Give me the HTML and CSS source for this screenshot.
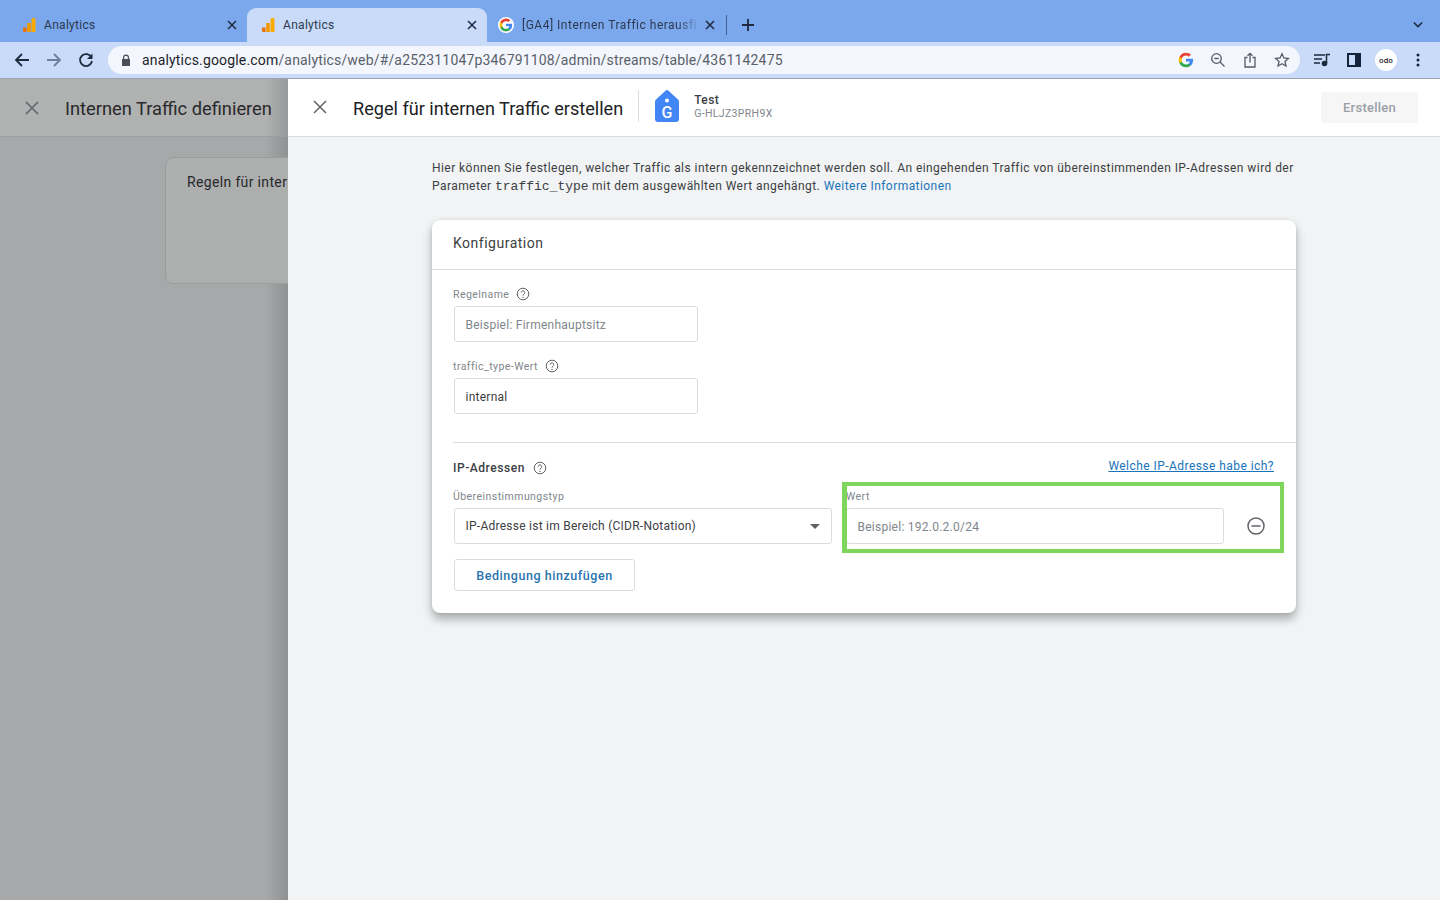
FILE: index.html
```html
<!DOCTYPE html>
<html lang="de">
<head>
    <meta charset="UTF-8">
    <title>Analytics</title>
    <link rel="stylesheet" href="styles.css">
</head>
<body>
    <div class="tabstrip">
        <div class="tab">
            <svg class="favicon" viewBox="0 0 16 16"><path fill="#e8710a" d="M2 10.500h3.500V15H3.500A1.500 1.500 0 0 1 2 13.500z"/><rect fill="#f29900" x="6.200" y="6" width="3.600" height="9"/><path fill="#f9ab00" d="M10.500 2.500A1.500 1.500 0 0 1 12 1h1a1.500 1.500 0 0 1 1.500 1.500V15h-4z"/></svg>
            <span class="tab-title">Analytics</span>
            <svg class="tab-close" viewBox="0 0 10 10"><path d="M1 1l8 8M9 1l-8 8"/></svg>
        </div>
        <div class="tab tab-active">
            <svg class="favicon" viewBox="0 0 16 16"><path fill="#e8710a" d="M2 10.500h3.500V15H3.500A1.500 1.500 0 0 1 2 13.500z"/><rect fill="#f29900" x="6.200" y="6" width="3.600" height="9"/><path fill="#f9ab00" d="M10.500 2.500A1.500 1.500 0 0 1 12 1h1a1.500 1.500 0 0 1 1.500 1.500V15h-4z"/></svg>
            <span class="tab-title">Analytics</span>
            <svg class="tab-close" viewBox="0 0 10 10"><path d="M1 1l8 8M9 1l-8 8"/></svg>
        </div>
        <div class="tab tab-last">
            <svg class="favicon favicon-round" viewBox="0 0 24 24"><path fill="#4285f4" d="M22.560 12.250c0-.78-.07-1.530-.2-2.250H12v4.260h5.920c-.26 1.370-1.040 2.530-2.210 3.310v2.770h3.570c2.080-1.920 3.280-4.740 3.280-8.090z"/><path fill="#34a853" d="M12 23c2.970 0 5.460-.98 7.280-2.660l-3.570-2.770c-.98.660-2.230 1.060-3.710 1.060-2.860 0-5.290-1.930-6.160-4.530H2.180v2.840C3.990 20.530 7.700 23 12 23z"/><path fill="#fbbc05" d="M5.840 14.090c-.22-.66-.35-1.360-.35-2.090s.13-1.430.35-2.090V7.070H2.180C1.430 8.550 1 10.220 1 12s.43 3.450 1.180 4.930l3.660-2.840z"/><path fill="#ea4335" d="M12 5.380c1.620 0 3.060.56 4.210 1.640l3.150-3.150C17.450 2.090 14.970 1 12 1 7.700 1 3.990 3.470 2.180 7.070l3.660 2.840c.87-2.600 3.300-4.530 6.160-4.530z"/></svg>
            <span class="tab-title tab-title-fade">[GA4] Internen Traffic herausfi</span>
            <svg class="tab-close" viewBox="0 0 10 10"><path d="M1 1l8 8M9 1l-8 8"/></svg>
        </div>
        <svg class="new-tab" viewBox="0 0 12 12"><path d="M6 0v12M0 6h12"/></svg>
        <svg class="tab-search" viewBox="0 0 12 8"><path d="M1 1.500l5 5 5-5"/></svg>
    </div>

    <div class="toolbar">
        <svg class="nav-icon" viewBox="0 0 16 16"><path d="M15 8H2M8 2L2 8l6 6"/></svg>
        <svg class="nav-icon nav-off" viewBox="0 0 16 16"><path d="M1 8h13M8 2l6 6-6 6"/></svg>
        <svg class="nav-icon" viewBox="0 0 16 16"><path d="M13.500 5.500A6 6 0 1 0 14 9"/><path class="solid" d="M14.500 1.500v5.500H9z"/></svg>
        <div class="omnibox">
            <svg class="lock" viewBox="0 0 10 12"><path d="M2 5V3.500a3 3 0 0 1 6 0V5h1v7H1V5zm1.200 0h3.600V3.500a1.800 1.800 0 0 0-3.600 0z"/></svg>
            <span class="url"><b>analytics.google.com</b>/analytics/web/#/a252311047p346791108/admin/streams/table/4361142475</span>
            <svg class="omni-icon omni-g" viewBox="0 0 24 24"><path fill="#4285f4" d="M22.560 12.250c0-.78-.07-1.530-.2-2.250H12v4.260h5.920c-.26 1.370-1.040 2.530-2.210 3.310v2.770h3.570c2.080-1.920 3.280-4.740 3.280-8.090z"/><path fill="#34a853" d="M12 23c2.970 0 5.460-.98 7.280-2.660l-3.570-2.770c-.98.660-2.230 1.060-3.710 1.060-2.860 0-5.290-1.930-6.160-4.530H2.180v2.840C3.990 20.530 7.700 23 12 23z"/><path fill="#fbbc05" d="M5.840 14.090c-.22-.66-.35-1.360-.35-2.090s.13-1.430.35-2.090V7.070H2.180C1.430 8.550 1 10.220 1 12s.43 3.450 1.180 4.930l3.660-2.840z"/><path fill="#ea4335" d="M12 5.380c1.620 0 3.060.56 4.210 1.640l3.150-3.150C17.450 2.090 14.970 1 12 1 7.700 1 3.990 3.470 2.180 7.070l3.660 2.840c.87-2.600 3.300-4.530 6.160-4.530z"/></svg>
            <svg class="omni-icon" viewBox="0 0 16 16"><circle cx="6.500" cy="6.500" r="4.800"/><path d="M4.300 6.500h4.400M10 10l4.500 4.500"/></svg>
            <svg class="omni-icon" viewBox="0 0 16 16"><path d="M5.500 5.500H3v9.500h10V5.500h-2.500M8 10.500V1.500M5.500 3.800L8 1.300l2.500 2.500"/></svg>
            <svg class="omni-icon" viewBox="0 0 16 16"><path d="M8 1.800l1.900 4.200 4.500.5-3.400 3 1 4.500L8 11.700 4 14l1-4.500-3.400-3 4.500-.5z"/></svg>
        </div>
        <svg class="ext-icon ext-media" viewBox="0 0 16 14"><path class="line" d="M0 2h11M0 6h8M0 10h6"/><path class="line" d="M12.500 10V1.500H16"/><circle class="dot" cx="10.500" cy="10.500" r="2.800"/></svg>
        <svg class="ext-icon ext-panel" viewBox="0 0 14 14"><path d="M0 0h14v14H0zM2 2v10h6V2z" fill-rule="evenodd"/></svg>
        <div class="avatar"><span>odo</span></div>
        <svg class="ext-icon ext-menu" viewBox="0 0 4 14"><circle cx="2" cy="2" r="1.500"/><circle cx="2" cy="7" r="1.500"/><circle cx="2" cy="12" r="1.500"/></svg>
    </div>

    <div class="page">
        <!-- abgedunkelte Seite hinter dem Drawer -->
        <aside class="behind">
            <div class="behind-head">
                <svg class="close-icon" viewBox="0 0 14 14"><path d="M1 1l12 12M13 1L1 13"/></svg>
                <span class="behind-title">Internen Traffic definieren</span>
            </div>
            <div class="behind-card">Regeln für inter</div>
        </aside>

        <section class="drawer">
            <header class="drawer-head">
                <svg class="close-icon" viewBox="0 0 14 14"><path d="M1 1l12 12M13 1L1 13"/></svg>
                <h1 class="drawer-title">Regel für internen Traffic erstellen</h1>
                <div class="stream">
                    <svg class="stream-icon" viewBox="0 0 24 32"><path fill="#4285f4" d="M10.500 .8a2.200 2.200 0 0 1 3 0l9.500 8.700a3 3 0 0 1 1 2.200V29a3 3 0 0 1-3 3H3a3 3 0 0 1-3-3V11.700a3 3 0 0 1 1-2.200z"/><circle cx="12" cy="10.500" r="2" fill="#fff"/><text x="12" y="27.500" text-anchor="middle">G</text></svg>
                    <div class="stream-text">
                        <div class="stream-name">Test</div>
                        <div class="stream-id">G-HLJZ3PRH9X</div>
                    </div>
                </div>
                <button class="create-btn">Erstellen</button>
            </header>

            <div class="drawer-body">
                <p class="intro">Hier können Sie festlegen, welcher Traffic als intern gekennzeichnet werden soll. An eingehenden Traffic von übereinstimmenden IP-Adressen wird der Parameter <code>traffic_type</code> mit dem ausgewählten Wert angehängt. <a href="#">Weitere Informationen</a></p>

                <div class="card">
                    <div class="card-head">Konfiguration</div>
                    <div class="card-top">
                        <div class="field-label">Regelname
                            <svg class="help" viewBox="0 0 14 14"><circle cx="7" cy="7" r="5.800"/><path d="M5.200 5.600a1.800 1.800 0 1 1 2.800 1.500c-.7.500-1 .8-1 1.600"/><circle class="help-dot" cx="7" cy="10.400" r=".7"/></svg>
                        </div>
                        <div class="input input-short placeholder">Beispiel: Firmenhauptsitz</div>
                        <div class="field-label field-label-next">traffic_type-Wert
                            <svg class="help" viewBox="0 0 14 14"><circle cx="7" cy="7" r="5.800"/><path d="M5.200 5.600a1.800 1.800 0 1 1 2.800 1.500c-.7.500-1 .8-1 1.600"/><circle class="help-dot" cx="7" cy="10.400" r=".7"/></svg>
                        </div>
                        <div class="input input-short">internal</div>
                    </div>

                    <div class="card-bottom">
                        <div class="ip-head">
                            <span class="ip-title">IP-Adressen
                                <svg class="help" viewBox="0 0 14 14"><circle cx="7" cy="7" r="5.800"/><path d="M5.200 5.600a1.800 1.800 0 1 1 2.800 1.500c-.7.500-1 .8-1 1.600"/><circle class="help-dot" cx="7" cy="10.400" r=".7"/></svg>
                            </span>
                            <a class="ip-link" href="#">Welche IP-Adresse habe ich?</a>
                        </div>
                        <div class="ip-row">
                            <div class="ip-type">
                                <div class="field-label">Übereinstimmungstyp</div>
                                <div class="input select">IP-Adresse ist im Bereich (CIDR-Notation)<span class="caret"></span></div>
                            </div>
                            <div class="ip-value">
                                <div class="field-label">Wert</div>
                                <div class="input placeholder">Beispiel: 192.0.2.0/24</div>
                            </div>
                            <svg class="remove" viewBox="0 0 18 18"><circle cx="9" cy="9" r="8"/><path d="M4.500 9h9"/></svg>
                            <div class="highlight"></div>
                        </div>
                        <button class="add-btn">Bedingung hinzufügen</button>
                    </div>
                </div>
            </div>
        </section>
    </div>
</body>
</html>
```

FILE: styles.css
```css
* {
    box-sizing: border-box;
}

html, body {
    margin: 0;
    padding: 0;
    height: 900px;
    overflow: hidden;
}

body {
    font-family: Roboto, "Liberation Sans", sans-serif;
    color: #3c4043;
    background: #f1f3f4;
}

/* Browser */
.tabstrip {
    display: flex;
    align-items: flex-end;
    height: 42px;
    padding-left: 8px;
    background: #7ba7ec;
}

.tab {
    display: flex;
    align-items: center;
    width: 239px;
    height: 34px;
    padding: 0 6px 0 13px;
    border-radius: 9px 9px 0 0;
    font-size: 12px;
    color: #2b3a50;
}

.tab-active {
    width: 240px;
    background: #c9dbf8;
}

.tab-last {
    position: relative;
    width: 240px;
    padding-left: 11px;
    padding-right: 10px;
}

.tab-last::after {
    content: "";
    position: absolute;
    right: 0;
    top: 7px;
    height: 20px;
    width: 1px;
    background: #3f5f8f;
}

.favicon {
    width: 16px;
    height: 16px;
    flex: none;
    margin-right: 7px;
}

.favicon-round {
    background: #fff;
    border-radius: 50%;
    padding: 1px;
    margin-right: 8px;
}

.tab-title {
    flex: 1;
    white-space: nowrap;
    letter-spacing: 0.3px;
}

.tab-title-fade {
    letter-spacing: 0.5px;
    -webkit-mask-image: linear-gradient(to right, #000 88%, rgba(0, 0, 0, 0.15) 100%);
    mask-image: linear-gradient(to right, #000 88%, rgba(0, 0, 0, 0.15) 100%);
}

.tab-close {
    width: 10px;
    height: 10px;
    flex: none;
    margin: 0 4px 0 8px;
    fill: none;
    stroke: #1d2a3d;
    stroke-width: 1.5;
}

.new-tab {
    width: 12px;
    height: 12px;
    margin: 0 0 11px 15px;
    fill: none;
    stroke: #1d2a3d;
    stroke-width: 1.8;
}

.tab-search {
    width: 10px;
    height: 7px;
    margin: 0 17px 14px auto;
    fill: none;
    stroke: #1d2a3d;
    stroke-width: 1.8;
}

.toolbar {
    display: flex;
    align-items: center;
    height: 37px;
    padding: 0 0 1px 14px;
    background: #c9dbf8;
    border-bottom: 1px solid #9aa3b0;
}

.nav-icon {
    width: 16px;
    height: 16px;
    margin-right: 16px;
    fill: none;
    stroke: #1d2a3d;
    stroke-width: 1.8;
}

.nav-icon .solid {
    fill: #1d2a3d;
    stroke: none;
}

.nav-off {
    stroke: #6d7f99;
}

.omnibox {
    display: flex;
    align-items: center;
    width: 1192px;
    height: 28px;
    margin-left: -2px;
    padding: 0 10px 0 13px;
    border-radius: 14px;
    background: #f3f7fd;
}

.lock {
    width: 10px;
    height: 12px;
    margin-right: 11px;
    fill: #4a4f57;
}

.url {
    flex: 1;
    font-size: 14px;
    letter-spacing: 0.17px;
    color: #5a6069;
}

.url b {
    font-weight: 400;
    color: #1f2329;
}

.omni-icon {
    width: 16px;
    height: 16px;
    margin-left: 16px;
    fill: none;
    stroke: #555b64;
    stroke-width: 1.3;
}

.omni-g {
    stroke: none;
}

.ext-icon {
    flex: none;
}

.ext-media {
    width: 16px;
    height: 14px;
    margin-left: 14px;
}

.ext-media .line {
    fill: none;
    stroke: #1d2a3d;
    stroke-width: 1.5;
}

.ext-media .dot {
    fill: #1d2a3d;
}

.ext-panel {
    width: 14px;
    height: 14px;
    margin-left: 17px;
    fill: #14233a;
}

.avatar {
    display: flex;
    align-items: center;
    justify-content: center;
    width: 22px;
    height: 22px;
    margin-left: 14px;
    border-radius: 50%;
    background: #fff;
    font: 600 7.5px "Open Sans", sans-serif;
    color: #222;
}

.ext-menu {
    width: 4px;
    height: 14px;
    margin-left: 19px;
    fill: #14233a;
}

/* Seite */
.page {
    display: flex;
    height: 821px;
}

.behind {
    flex: none;
    width: 288px;
    overflow: hidden;
    background: linear-gradient(to right, #a6a8a9 92%, #8f9192 100%);
}

.behind-head {
    display: flex;
    align-items: center;
    height: 58px;
    padding-left: 25px;
    border-bottom: 1px solid #9b9d9e;
    background: linear-gradient(to right, #b0b1b1 92%, #98999a 100%);
}

.close-icon {
    width: 14px;
    height: 14px;
    flex: none;
    fill: none;
    stroke: #5f6368;
    stroke-width: 1.5;
}

.behind-title {
    margin: 2px 0 0 26px;
    font-size: 18.3px;
    white-space: nowrap;
    color: #28292b;
}

.behind-card {
    width: 300px;
    height: 127px;
    margin: 20px 0 0 165px;
    padding: 16px 21px;
    border: 1px solid #999b9d;
    border-radius: 8px;
    background: #adafaf;
    font-size: 14px;
    letter-spacing: 0.35px;
    white-space: nowrap;
    color: #27282a;
}

.drawer {
    flex: 1;
    min-width: 0;
}

.drawer-head {
    display: flex;
    align-items: center;
    height: 58px;
    padding: 0 22px 2px 25px;
    background: #fff;
    border-bottom: 1px solid #dadce0;
}

.drawer-title {
    margin: 4px 0 0 26px;
    font-size: 18.1px;
    font-weight: 400;
    color: #202124;
}

.stream {
    display: flex;
    align-items: center;
    height: 32px;
    margin: 0 0 1px 15px;
    padding-left: 16px;
    border-left: 1px solid #dadce0;
}

.stream-icon {
    width: 24px;
    height: 32px;
}

.stream-icon text {
    font: 500 16px Roboto, sans-serif;
    fill: #fff;
}

.stream-text {
    margin-left: 15px;
}

.stream-name {
    font-size: 12px;
    font-weight: 500;
    letter-spacing: 0.4px;
    color: #3c4043;
}

.stream-id {
    font-size: 10.5px;
    letter-spacing: 0.35px;
    color: #80868b;
}

.create-btn {
    width: 97px;
    height: 31px;
    margin: 2px 0 0 auto;
    border: 0;
    border-radius: 4px;
    background: #f6f6f6;
    font: 500 13px Roboto, sans-serif;
    letter-spacing: 0.25px;
    color: #9aa0a6;
}

.drawer-body {
    padding: 22px 144px 0;
}

.intro {
    margin: 0 -4px 25px 0;
    font-size: 12px;
    line-height: 18px;
    letter-spacing: 0.44px;
    color: #3c4043;
}

.intro code {
    font: 13px/1 "Liberation Mono", monospace;
    letter-spacing: 0;
}

.intro a {
    color: #1a73b8;
    text-decoration: none;
}

/* Konfiguration */
.card {
    height: 393px;
    background: #fff;
    border-radius: 8px;
    box-shadow: 0 6px 10px rgba(60, 64, 67, 0.4), 0 0 3px rgba(60, 64, 67, 0.12);
}

.card-head {
    height: 50px;
    padding: 15px 21px 0;
    border-bottom: 1px solid #dadce0;
    font-size: 14px;
    letter-spacing: 0.5px;
    color: #3c4043;
}

.card-top {
    margin-left: 21px;
    padding: 16px 0 28px;
    border-bottom: 1px solid #dadce0;
}

.field-label {
    display: flex;
    align-items: center;
    height: 16px;
    margin-bottom: 4px;
    font-size: 10.5px;
    letter-spacing: 0.45px;
    color: #80868b;
}

.field-label-next {
    margin-top: 16px;
}

.help {
    flex: none;
    width: 14px;
    height: 14px;
    margin-left: 7px;
    fill: none;
    stroke: #5f6368;
    stroke-width: 1;
}

.help-dot {
    fill: #5f6368;
    stroke: none;
}

.input {
    display: flex;
    align-items: center;
    height: 36px;
    padding: 1px 11px 0 10.500px;
    border: 1px solid #dadce0;
    border-radius: 3px;
    background: #fff;
    font-size: 12px;
    letter-spacing: 0.25px;
    color: #3c4043;
}

.input-short {
    width: 244px;
    margin-left: 1px;
}

.placeholder {
    color: #80868b;
}

.card-bottom {
    padding: 15px 21px 0;
}

.ip-head {
    display: flex;
    justify-content: space-between;
    align-items: center;
    height: 20px;
}

.ip-title {
    display: flex;
    align-items: center;
    font-size: 12px;
    font-weight: 500;
    letter-spacing: 0.55px;
    color: #3c4043;
}

.ip-title .help {
    margin: 0 0 1px 8px;
}

.ip-link {
    margin: 0 1px 4px 0;
    font-size: 12px;
    letter-spacing: 0.45px;
    color: #1a73b8;
}

.ip-row {
    position: relative;
    display: flex;
    align-items: flex-end;
    margin-top: 10px;
}

.ip-type {
    width: 379px;
}

.ip-value {
    width: 378px;
    margin-left: 14px;
}

.select {
    justify-content: space-between;
    margin-left: 1px;
    padding-top: 0;
}

.caret {
    width: 0;
    height: 0;
    border: 5px solid transparent;
    border-top: 5px solid #5f6368;
    border-bottom: 0;
}

.remove {
    width: 18px;
    height: 18px;
    margin: 0 0 9px 23px;
    fill: none;
    stroke: #5f6368;
    stroke-width: 1.5;
}

/* gruene Markierung ueber dem Feld */
.highlight {
    position: absolute;
    left: 389px;
    top: -6px;
    width: 442px;
    height: 71px;
    border: solid #7fd65c;
    border-width: 4px 4px 4px 5px;
    pointer-events: none;
}

.add-btn {
    display: block;
    width: 181px;
    height: 32px;
    margin: 15px 0 0 1px;
    border: 1px solid #dadce0;
    border-radius: 3px;
    background: #fff;
    font: 500 12.5px Roboto, sans-serif;
    letter-spacing: 0.55px;
    color: #2a75b0;
}
```
